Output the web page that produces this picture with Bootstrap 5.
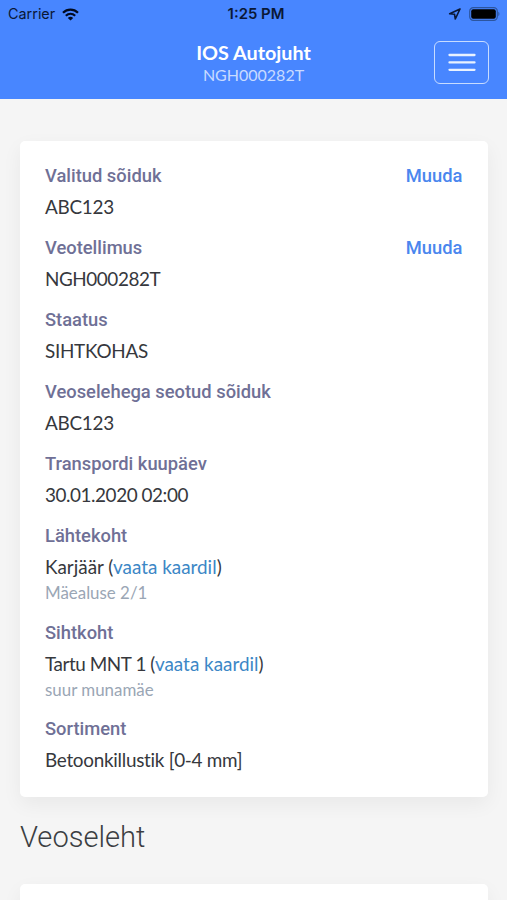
<!DOCTYPE html>
<html lang="et">
<head>
<meta charset="utf-8">
<meta name="viewport" content="width=device-width, initial-scale=1">
<title>IOS Autojuht</title>
<link href="https://cdn.jsdelivr.net/npm/bootstrap@5.3.0/dist/css/bootstrap.min.css" rel="stylesheet">
<style>
html, body { overflow: hidden; height: 900px; }
body { background: #f5f5f5; color: #36383d; font-family: Lato, sans-serif; font-size: 18.9px; font-variant-ligatures: none; }
.app-top { background: #4886ff; height: 98.5px; }
.status-bar { height: 28px; font: 400 14.4px/28px Inter, sans-serif; color: #0a1836; padding: 0 7px 0 8px; }
.status-bar .clock { font-weight: 600; font-size: 14.9px; color: #0a1836; padding-left: 4px; }
.status-side { flex: 1 1 0; }
.wifi-icon { margin-left: 7px; }
.title-bar { height: 69px; padding: 0 18px; }
.app-name { font-size: 19.8px; font-weight: 700; line-height: 24px; color: #fff; padding-top: 1px; }
.app-order { font-size: 16px; line-height: 22px; color: #c8dbff; }
.menu-btn { width: 55px; height: 43px; padding: 0; border: 1.5px solid #c8dcff; border-radius: 6px; }
.panel { margin: 0 19.5px 0 20px; border: 0; border-radius: 5px; box-shadow: 0 7px 20px rgba(0,0,0,.055); }
.panel-main { margin-top: 42.5px; height: 656px; padding: 18px 25px 0; }
.panel-next { height: 60px; }
.field { margin-bottom: 8px; }
.field-label { font: 500 18.35px/34px Roboto, sans-serif; color: #6f7096; }
.field-edit { font: 500 18.35px/34px Roboto, sans-serif; color: #4a86ee; text-decoration: none; }
.field-value { line-height: 30px; margin-top: -1px; margin-bottom: 1px; }
.field-value a { color: #3c87c6; text-decoration: none; }
.snug { letter-spacing: -.28px; }
.tight { letter-spacing: -.44px; }
.field-note { font-size: 16.9px; line-height: 22px; color: #9aa6b5; margin-top: -1px; margin-bottom: 3.5px; }
.section-title { font: 300 29.1px/40px Roboto, sans-serif; color: #3b3e42; margin: 20px 20px 27px; }
</style>
</head>
<body>
<header class="app-top">
  <div class="status-bar d-flex align-items-center">
    <div class="status-side d-flex align-items-center">
      <span>Carrier</span>
      <svg class="wifi-icon" width="17" height="13" viewBox="0 0 17 13" fill="none" stroke="#000a20" stroke-width="2.2"><path d="M1 4.7C5.3.5 11.7.5 16 4.7M3.8 7.7c2.8-2.5 6.6-2.5 9.4 0"/><path d="M8.5 12.6 5.8 9.9c1.6-1.4 3.8-1.4 5.4 0z" fill="#000a20" stroke="none"/></svg>
    </div>
    <span class="clock">1:25 PM</span>
    <div class="status-side d-flex align-items-center justify-content-end">
      <svg width="13" height="12" viewBox="0 0 13 12" fill="none" stroke="#0a1836" stroke-width="1.6" stroke-linejoin="round"><path d="M12 1 1.7 5.8l4.8.4.8 4.8z"/></svg>
      <svg class="ms-2" width="31" height="14" viewBox="0 0 31 14"><rect x=".7" y=".7" width="27.6" height="12.6" rx="3.6" fill="none" stroke="#2c559f" stroke-width="1.2"/><rect x="2.2" y="2.2" width="24.6" height="9.6" rx="2" fill="#000"/><path d="M29.3 4.8c1.5.6 1.5 3.8 0 4.4z" fill="#2c559f"/></svg>
    </div>
  </div>
  <nav class="title-bar d-flex align-items-center">
    <div class="status-side"></div>
    <div class="text-center">
      <div class="app-name">IOS Autojuht</div>
      <div class="app-order">NGH000282T</div>
    </div>
    <div class="status-side d-flex justify-content-end">
      <button type="button" class="btn menu-btn d-flex align-items-center justify-content-center" aria-label="Menüü">
        <svg width="28" height="20" viewBox="0 0 28 20" stroke="#e9f2ff" stroke-width="2.3" stroke-linecap="round"><path d="M1.5 2h25M1.5 9.4h25M1.5 16.8h25"/></svg>
      </button>
    </div>
  </nav>
</header>
<main>
  <section class="card panel panel-main">
    <div class="field"><div class="d-flex justify-content-between"><span class="field-label">Valitud sõiduk</span><a class="field-edit" href="#">Muuda</a></div><div class="field-value snug">ABC123</div></div>
    <div class="field"><div class="d-flex justify-content-between"><span class="field-label">Veotellimus</span><a class="field-edit" href="#">Muuda</a></div><div class="field-value tight">NGH000282T</div></div>
    <div class="field"><div class="field-label">Staatus</div><div class="field-value snug">SIHTKOHAS</div></div>
    <div class="field"><div class="field-label">Veoselehega seotud sõiduk</div><div class="field-value snug">ABC123</div></div>
    <div class="field"><div class="field-label">Transpordi kuupäev</div><div class="field-value tight">30.01.2020 02:00</div></div>
    <div class="field"><div class="field-label">Lähtekoht</div><div class="field-value">Karjäär (<a href="#">vaata kaardil</a>)</div><div class="field-note">Mäealuse 2/1</div></div>
    <div class="field"><div class="field-label">Sihtkoht</div><div class="field-value"><span class="tight">Tartu MNT 1 (</span><a href="#">vaata kaardil</a>)</div><div class="field-note">suur munamäe</div></div>
    <div class="field"><div class="field-label">Sortiment</div><div class="field-value snug">Betoonkillustik [0-4 mm]</div></div>
  </section>
  <h2 class="section-title">Veoseleht</h2>
  <section class="card panel panel-next"></section>
</main>
<script src="https://cdn.jsdelivr.net/npm/bootstrap@5.3.0/dist/js/bootstrap.bundle.min.js"></script>
</body>
</html>
